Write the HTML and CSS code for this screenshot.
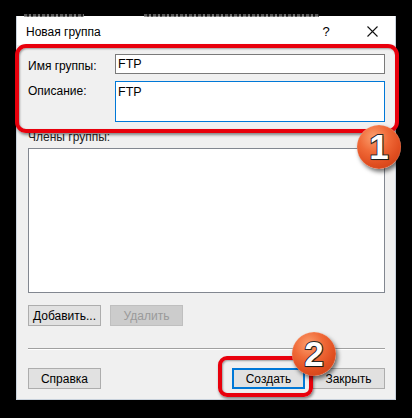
FILE: index.html
```html
<!DOCTYPE html>
<html lang="ru">
<head>
<meta charset="utf-8">
<title>Новая группа</title>
<link rel="stylesheet" href="styles.css">
</head>
<body>
<div class="stage">
  <div class="ghost"><span class="g1"></span><span class="g2"></span></div>
  <div class="dialog">
    <div class="titlebar">
      <span class="title">Новая группа</span>
      <span class="tb-btn help">?</span>
      <span class="tb-btn close">
        <svg width="11" height="11" viewBox="0 0 11 11"><path d="M0.5 0.5 L10.5 10.5 M10.5 0.5 L0.5 10.5" stroke="#111" stroke-width="1.1" fill="none"/></svg>
      </span>
    </div>
    <div class="content">
      <div class="form">
        <label class="lbl">Имя группы:</label>
        <div class="input">FTP</div>
        <label class="lbl lbl2">Описание:</label>
        <div class="input area">FTP</div>
      </div>
      <div class="members-lbl">Члены группы:</div>
      <div class="listbox"></div>
      <div class="row">
        <span class="btn">Добавить...</span>
        <span class="btn disabled">Удалить</span>
      </div>
      <div class="sep"></div>
      <div class="row bottom">
        <span class="btn">Справка</span>
        <span class="spacer"></span>
        <span class="btn default">Создать</span>
        <span class="btn">Закрыть</span>
      </div>
    </div>
  </div>
</div>
<div class="hl hl1"></div>
<div class="hl hl2"></div>
<div class="badge b1">1</div>
<div class="badge b2">2</div>
</body>
</html>
```
FILE: styles.css
```css
* { box-sizing: border-box; }
html, body { margin: 0; padding: 0; }
body {
  width: 412px;
  height: 418px;
  background: #000;
  overflow: hidden;
  position: relative;
  font-family: "Liberation Sans", Arial, sans-serif;
  font-size: 12px;
  color: #000;
}
.stage { padding: 16px 0 0 16px; position: relative; }
.ghost {
  position: absolute;
  top: 14px; left: 24px;
  height: 3px; width: 300px;
}
.ghost span {
  position: absolute; top: 0; height: 3px;
  background: repeating-linear-gradient(90deg, #777 0 3px, #222 3px 5px, #999 5px 7px, #111 7px 9px);
  opacity: .7;
}
.g1 { left: 0; width: 60px; }
.g2 { left: 120px; width: 175px; }
.dialog {
  width: 380px;
  height: 384px;
  background: #f0f0f0;
  border: 1px solid #c9d2dc;
  border-top: none;
  display: flex;
  flex-direction: column;
}
.titlebar {
  height: 29px;
  background: #fff;
  display: flex;
  align-items: center;
  padding-left: 9px;
  font-size: 12px;
}
.title { flex: 1; padding-top: 2px; }
.tb-btn {
  width: 46px;
  height: 29px;
  display: flex;
  align-items: center;
  justify-content: center;
}
.help { font-size: 13px; padding-top: 2px; }
.close svg { display: block; margin-top: 1px; }
.content {
  flex: 1;
  padding: 9px 10px 0 11px;
  display: flex;
  flex-direction: column;
}
.form {
  display: grid;
  grid-template-columns: 87px 1fr;
  row-gap: 7px;
  align-items: start;
}
.lbl { padding-top: 5px; line-height: 14px; }
.lbl2 { padding-top: 3px; }
.input {
  height: 20px;
  background: #fff;
  border: 1px solid #7a7a7a;
  padding: 2px 0 0 2px;
  line-height: 14px;
  font-size: 12.5px;
}
.input.area {
  height: 41px;
  border-color: #0078d7;
  padding-top: 3px;
}
.members-lbl {
  margin-top: 8px;
  line-height: 14px;
  color: #222;
}
.listbox {
  margin-top: 4px;
  height: 145px;
  background: #fff;
  border: 1px solid #828790;
}
.row {
  display: flex;
  gap: 9px;
  margin-top: 12px;
}
.btn {
  width: 73px;
  height: 21px;
  background: #e1e1e1;
  border: 1px solid #adadad;
  display: flex;
  align-items: center;
  justify-content: center;
  font-size: 12px;
}
.btn.disabled {
  background: #cccccc;
  border-color: #bfbfbf;
  color: #9a9a9a;
}
.btn.default {
  border: 2px solid #0078d7;
}
.sep {
  margin-top: 22px;
  border-top: 1px solid #a0a0a0;
  border-bottom: 1px solid #fff;
}
.row.bottom { margin-top: 18px; gap: 7px; }
.spacer { flex: 1; }

.hl {
  position: absolute;
  border: 4px solid #e8000c;
  border-radius: 11px;
  box-shadow: 1px 2px 3px rgba(0,0,0,.45), inset 1px 1px 2px rgba(0,0,0,.35);
}
.hl1 { left: 15px; top: 44px; width: 384px; height: 89px; }
.hl2 { left: 218px; top: 356px; width: 95px; height: 41px; border-radius: 9px; }

.badge {
  position: absolute;
  width: 44px;
  height: 44px;
  border-radius: 50%;
  background: radial-gradient(circle at 38% 28%, #fb9f6e 0%, #f06a38 35%, #e04e20 65%, #c63a12 100%);
  box-shadow: 2px 3px 4px rgba(0,0,0,.55), inset 0 0 1px rgba(255,255,255,.6);
  color: #fff;
  font-family: "Liberation Sans", Arial, sans-serif;
  font-weight: bold;
  font-size: 35px;
  line-height: 44px;
  text-align: center;
  -webkit-text-stroke: 2px #2a2a2a;
  paint-order: stroke fill;
  text-shadow: 1px 1px 1px rgba(0,0,0,.4);
}
.b1 { left: 357px; top: 125px; }
.b2 { left: 292px; top: 332px; }
```
